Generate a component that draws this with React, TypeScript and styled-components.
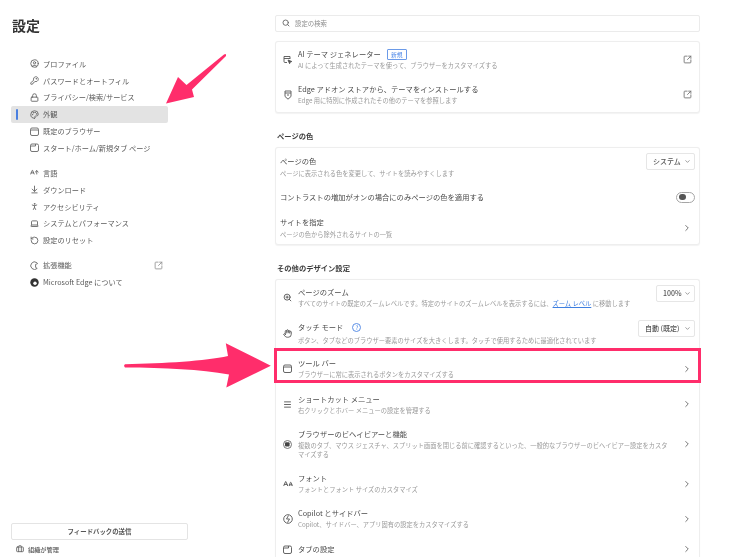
import React from "react";
import styled, { createGlobalStyle } from "styled-components";
import {
  AArrowUp, ALargeSmall, ArrowDownToLine, ChevronDown, ChevronRight, CircleUser, Hand, KeyRound, Laptop, Lock,
  Menu, Palette, PersonStanding, RotateCcw, Search, SquareArrowOutUpRight, ZoomIn, Briefcase,
} from "lucide-react";

const Global = createGlobalStyle`
  html, body { margin: 0; padding: 0; background: #fff; }
  body { font-family: "Noto Sans CJK JP", "Noto Sans", sans-serif; color: #4a4a4a; }
  * { box-sizing: border-box; }
`;

const Page = styled.div`
  position: relative;
  display: flex;
  width: 750px;
  height: 557px;
  overflow: hidden;
  background: #fff;
  filter: blur(0.3px);
`;

const Sidebar = styled.aside`
  display: flex;
  flex-direction: column;
  flex: 0 0 275px;
  height: 557px;
  padding: 0 0 0 11px;
`;

const Title = styled.h1`
  flex: none;
  margin: 15px 0 0 1px;
  height: 40.5px;
  font-size: 14px;
  line-height: 20px;
  font-weight: 700;
  color: #333;
`;

const NavGroup = styled.nav`
  display: flex;
  flex: none;
  flex-direction: column;
  width: 157px;
  margin-bottom: 8.3px;
`;

const NavItem = styled.div<{ $active?: boolean }>`
  position: relative;
  display: flex;
  align-items: center;
  gap: 4px;
  height: 16.8px;
  padding-left: 19px;
  font-size: 7.2px;
  color: #5a5a5a;
  border-radius: 2px;
  background: ${(p) => (p.$active ? "#e3e3e3" : "transparent")};
  &::before {
    content: "";
    display: ${(p) => (p.$active ? "block" : "none")};
    position: absolute;
    left: 5px;
    top: 3px;
    bottom: 3px;
    width: 2px;
    border-radius: 1px;
    background: #4a7fe0;
  }
  svg { flex: 0 0 9px; color: #666; }
`;

const NavExternal = styled.span`
  display: flex;
  margin-left: auto;
  margin-right: 5px;
  svg { color: #999; }
`;

const Foot = styled.div`
  margin-top: auto;
  display: flex;
  flex-direction: column;
`;

const Feedback = styled.button`
  width: 177px;
  height: 17px;
  padding: 0;
  background: #fff;
  border: 1px solid #e4e4e4;
  border-radius: 2px;
  font-family: inherit;
  font-size: 6.4px;
  font-weight: 700;
  color: #555;
`;

const Managed = styled.div`
  display: flex;
  align-items: center;
  gap: 4px;
  height: 16px;
  margin: 1px 0 0;
  padding-left: 5px;
  font-size: 6.2px;
  font-weight: 500;
  color: #555;
  svg { color: #666; }
`;

const Main = styled.main`
  display: flex;
  flex-direction: column;
  flex: 0 0 425px;
  height: 557px;
  padding-top: 15px;
`;

const SearchBox = styled.div`
  display: flex;
  flex: none;
  align-items: center;
  gap: 5px;
  height: 16.5px;
  margin-bottom: 9.5px;
  padding-left: 6px;
  border: 1px solid #ebebeb;
  border-radius: 2px;
  font-size: 6.4px;
  color: #8c8c8c;
  svg { color: #666; }
`;

const Card = styled.section`
  flex: none;
  background: #fff;
  border: 1px solid #eeeeee;
  border-radius: 3px;
  box-shadow: 0 0.5px 1px rgba(0, 0, 0, 0.05);
`;

const OpenCard = styled(Card)`
  border-bottom: none;
  border-radius: 3px 3px 0 0;
`;

const Heading = styled.h2`
  flex: none;
  height: 12px;
  margin: 17px 0 5px 2px;
  font-size: 7.3px;
  line-height: 12px;
  font-weight: 700;
  color: #3d3d3d;
`;

const Row = styled.div<{ $h: number; $pt?: number; $marked?: boolean }>`
  position: relative;
  display: flex;
  align-items: center;
  height: ${(p) => p.$h}px;
  padding: ${(p) => p.$pt ?? 0}px 4px 0 7px;
  ${(p) =>
    p.$marked
      ? `&::after {
          content: "";
          position: absolute;
          left: -2px;
          right: -2px;
          top: -3px;
          bottom: 3px;
          border: 3px solid #ff2d6b;
          pointer-events: none;
        }`
      : ""}
`;

const PlainRow = styled(Row)`
  padding-left: 4px;
`;

const RowIcon = styled.span`
  display: flex;
  flex: 0 0 15px;
  align-items: center;
  svg { color: #555; }
`;

const RowText = styled.div`
  flex: 1;
  min-width: 0;
  padding-right: 14px;
`;

const RowTitle = styled.div<{ $gap?: number }>`
  display: flex;
  align-items: center;
  gap: 6px;
  font-size: 7.3px;
  line-height: 11px;
  margin-bottom: ${(p) => p.$gap ?? 1}px;
  color: #4a4a4a;
`;

const RowDesc = styled.div`
  font-size: 6.25px;
  line-height: 9px;
  color: #9a9a9a;
`;

const Badge = styled.span`
  display: inline-flex;
  align-items: center;
  justify-content: center;
  width: 20px;
  height: 11.5px;
  border: 1px solid #6b9ae8;
  border-radius: 1px;
  font-size: 5.8px;
  color: #4a86e8;
`;

const HelpMark = styled.span`
  display: inline-flex;
  align-items: center;
  justify-content: center;
  width: 9px;
  height: 9px;
  margin-left: 3px;
  border: 1px solid #5b8fe6;
  border-radius: 50%;
  font-size: 6px;
  color: #4a86e8;
`;

const DocLink = styled.a`
  color: #3f7fe0;
  text-decoration: underline;
`;

const Select = styled.div<{ $w: number }>`
  display: flex;
  flex: 0 0 ${(p) => p.$w}px;
  align-self: flex-start;
  align-items: center;
  justify-content: space-between;
  height: 16.5px;
  margin-top: 5px;
  padding: 0 3px 0 6px;
  border: 1px solid #e6e6e6;
  border-radius: 2px;
  font-size: 7px;
  font-weight: 500;
  color: #555;
  svg { color: #777; }
`;

const Toggle = styled.div`
  display: flex;
  flex: 0 0 19px;
  align-items: center;
  height: 11px;
  padding-left: 2px;
  border: 1px solid #a6a6a6;
  border-radius: 6px;
  &::before {
    content: "";
    width: 6.5px;
    height: 6.5px;
    border-radius: 50%;
    background: #555;
  }
`;

const Trail = styled.span`
  display: flex;
  flex: 0 0 auto;
  margin-right: 3px;
  svg { color: #777; }
`;

const Overlay = styled.svg`
  position: absolute;
  left: 0;
  top: 0;
  pointer-events: none;
`;

const Stroke = { fill: "none", stroke: "currentColor", strokeWidth: 0.9 };
const line = { strokeWidth: 0.9, absoluteStrokeWidth: true };

const BrowserIcon = () => (
  <svg width="9" height="9" viewBox="0 0 9 9" {...Stroke}>
    <rect x="0.5" y="1" width="8" height="7.5" rx="1.5" />
    <path d="M0.5 3h8" />
  </svg>
);
const StartIcon = () => (
  <svg width="9" height="9" viewBox="0 0 9 9" {...Stroke}>
    <rect x="0.5" y="1" width="8" height="7.5" rx="1.5" />
    <path d="M0.5 3H5.5V1" />
  </svg>
);
const EdgeIcon = () => (
  <svg width="9" height="9" viewBox="0 0 9 9">
    <circle cx="4.5" cy="4.5" r="4.2" fill="#333" />
    <circle cx="5" cy="5.2" r="1.7" fill="#fff" />
  </svg>
);
const ExtensionIcon = () => (
  <svg width="9" height="9" viewBox="0 0 9 9" {...Stroke}>
    <path d="M6.8 1.6A3.8 3.8 0 1 0 7.2 7.4L5.6 6.4V3.4L7.6 2.6z" />
  </svg>
);
const BehaviorIcon = () => (
  <svg width="9" height="9" viewBox="0 0 9 9">
    <circle cx="4.5" cy="4.5" r="4" fill="none" stroke="#666" strokeWidth="0.9" />
    <rect x="2" y="2.2" width="4.6" height="4.2" rx="1" fill="#444" />
  </svg>
);
const CopilotIcon = () => (
  <svg width="10" height="10" viewBox="0 0 10 10" {...Stroke}>
    <circle cx="5" cy="5" r="4.3" />
    <path d="M5.5 1.5 3.5 5h3L4.5 8.5" />
  </svg>
);
const ThemeAiIcon = () => (
  <svg width="10" height="10" viewBox="0 0 10 10" {...Stroke}>
    <path d="M4 7.5H2a1 1 0 0 1-1-1V1.5h6V4M1 3.5h6" />
    <path d="M5 5l3.8 1.5-1.6.6-.6 1.6z" fill="currentColor" />
  </svg>
);
const AddonIcon = () => (
  <svg width="10" height="10" viewBox="0 0 10 10" {...Stroke}>
    <path d="M2 1h6v5.5L5 9.2 2 6.5z" />
    <path d="M2 3h6M4 5h2" />
  </svg>
);

const ext = <SquareArrowOutUpRight size={9} {...line} />;
const chevron = <ChevronRight size={10} strokeWidth={1} absoluteStrokeWidth />;
const caret = <ChevronDown size={7} strokeWidth={0.7} absoluteStrokeWidth />;

const navGroups: { icon: React.ReactNode; label: string; active?: boolean; external?: boolean }[][] = [
  [
    { icon: <CircleUser size={9} {...line} />, label: "プロファイル" },
    { icon: <KeyRound size={9} {...line} />, label: "パスワードとオートフィル" },
    { icon: <Lock size={9} {...line} />, label: "プライバシー/検索/サービス" },
    { icon: <Palette size={9} {...line} />, label: "外観", active: true },
    { icon: <BrowserIcon />, label: "既定のブラウザー" },
    { icon: <StartIcon />, label: "スタート/ホーム/新規タブ ページ" },
  ],
  [
    { icon: <AArrowUp size={9} {...line} />, label: "言語" },
    { icon: <ArrowDownToLine size={9} {...line} />, label: "ダウンロード" },
    { icon: <PersonStanding size={9} {...line} />, label: "アクセシビリティ" },
    { icon: <Laptop size={9} {...line} />, label: "システムとパフォーマンス" },
    { icon: <RotateCcw size={9} {...line} />, label: "設定のリセット" },
  ],
  [
    { icon: <ExtensionIcon />, label: "拡張機能", external: true },
    { icon: <EdgeIcon />, label: "Microsoft Edge について" },
  ],
];

export default function App() {
  return (
    <Page>
      <Global />
      <Sidebar>
        <Title>設定</Title>
        {navGroups.map((group, i) => (
          <NavGroup key={i}>
            {group.map((item) => (
              <NavItem key={item.label} $active={item.active}>
                {item.icon}
                {item.label}
                {item.external && <NavExternal>{ext}</NavExternal>}
              </NavItem>
            ))}
          </NavGroup>
        ))}
        <Foot>
          <Feedback>フィードバックの送信</Feedback>
          <Managed>
            <Briefcase size={8} {...line} />
            組織が管理
          </Managed>
        </Foot>
      </Sidebar>
      <Main>
        <SearchBox>
          <Search size={8} {...line} />
          設定の検索
        </SearchBox>
        <Card>
          <Row $h={35}>
            <RowIcon><ThemeAiIcon /></RowIcon>
            <RowText>
              <RowTitle>AI テーマ ジェネレーター <Badge>新規</Badge></RowTitle>
              <RowDesc>AI によって生成されたテーマを使って、ブラウザーをカスタマイズする</RowDesc>
            </RowText>
            <Trail>{ext}</Trail>
          </Row>
          <Row $h={35}>
            <RowIcon><AddonIcon /></RowIcon>
            <RowText>
              <RowTitle>Edge アドオン ストアから、テーマをインストールする</RowTitle>
              <RowDesc>Edge 用に特別に作成されたその他のテーマを参照します</RowDesc>
            </RowText>
            <Trail>{ext}</Trail>
          </Row>
        </Card>

        <Heading>ページの色</Heading>
        <Card>
          <PlainRow $h={38}>
            <RowText>
              <RowTitle $gap={2}>ページの色</RowTitle>
              <RowDesc>ページに表示される色を変更して、サイトを読みやすくします</RowDesc>
            </RowText>
            <Select $w={49}>システム {caret}</Select>
          </PlainRow>
          <PlainRow $h={22}>
            <RowText><RowTitle $gap={0}>コントラストの増加がオンの場合にのみページの色を適用する</RowTitle></RowText>
            <Toggle />
          </PlainRow>
          <PlainRow $h={36} $pt={4}>
            <RowText>
              <RowTitle $gap={2}>サイトを指定</RowTitle>
              <RowDesc>ページの色から除外されるサイトの一覧</RowDesc>
            </RowText>
            <Trail>{chevron}</Trail>
          </PlainRow>
        </Card>

        <Heading>その他のデザイン設定</Heading>
        <OpenCard>
          <Row $h={35}>
            <RowIcon><ZoomIn size={9} {...line} /></RowIcon>
            <RowText>
              <RowTitle>ページのズーム</RowTitle>
              <RowDesc>すべてのサイトの既定のズームレベルです。特定のサイトのズームレベルを表示するには、<DocLink>ズーム レベル</DocLink> に移動します</RowDesc>
            </RowText>
            <Select $w={39}>100% {caret}</Select>
          </Row>
          <Row $h={36}>
            <RowIcon><Hand size={9} {...line} /></RowIcon>
            <RowText>
              <RowTitle $gap={3}>タッチ モード <HelpMark>?</HelpMark></RowTitle>
              <RowDesc>ボタン、タブなどのブラウザー要素のサイズを大きくします。タッチで使用するために最適化されています</RowDesc>
            </RowText>
            <Select $w={57}>自動 (既定) {caret}</Select>
          </Row>
          <Row $h={35} $marked>
            <RowIcon><BrowserIcon /></RowIcon>
            <RowText>
              <RowTitle>ツール バー</RowTitle>
              <RowDesc>ブラウザーに常に表示されるボタンをカスタマイズする</RowDesc>
            </RowText>
            <Trail>{chevron}</Trail>
          </Row>
          <Row $h={36}>
            <RowIcon><Menu size={9} {...line} /></RowIcon>
            <RowText>
              <RowTitle>ショートカット メニュー</RowTitle>
              <RowDesc>右クリックとホバー メニューの設定を管理する</RowDesc>
            </RowText>
            <Trail>{chevron}</Trail>
          </Row>
          <Row $h={44}>
            <RowIcon><BehaviorIcon /></RowIcon>
            <RowText>
              <RowTitle>ブラウザーのビヘイビアーと機能</RowTitle>
              <RowDesc>複数のタブ、マウス ジェスチャ、スプリット画面を閉じる前に確認するといった、一般的なブラウザーのビヘイビアー設定をカスタマイズする</RowDesc>
            </RowText>
            <Trail>{chevron}</Trail>
          </Row>
          <Row $h={35}>
            <RowIcon><ALargeSmall size={10} {...line} /></RowIcon>
            <RowText>
              <RowTitle>フォント</RowTitle>
              <RowDesc>フォントとフォント サイズのカスタマイズ</RowDesc>
            </RowText>
            <Trail>{chevron}</Trail>
          </Row>
          <Row $h={35}>
            <RowIcon><CopilotIcon /></RowIcon>
            <RowText>
              <RowTitle>Copilot とサイドバー</RowTitle>
              <RowDesc>Copilot、サイドバー、アプリ固有の設定をカスタマイズする</RowDesc>
            </RowText>
            <Trail>{chevron}</Trail>
          </Row>
          <Row $h={26}>
            <RowIcon><StartIcon /></RowIcon>
            <RowText>
              <RowTitle $gap={0}>タブの設定</RowTitle>
            </RowText>
            <Trail>{chevron}</Trail>
          </Row>
        </OpenCard>
      </Main>
      <Overlay width="750" height="557" viewBox="0 0 750 557">
        <path
          d="M226 54.5 Q226.5 56 225 57 L192 89.5 L194 97 L166 103.5 L178 77 L186.5 85 L224 54.5 Q225.5 53.5 226 54.5Z"
          fill="#ff2d6b"
        />
        <path
          d="M125 364.2 C165 363.5 205 361 228 356 L225.8 343.3 L270.8 365.7 L226.3 387.5 L229 374.5 C200 369.5 165 367.5 125 367.5 Q123.2 365.8 125 364.2Z"
          fill="#ff2d6b"
        />
      </Overlay>
    </Page>
  );
}
